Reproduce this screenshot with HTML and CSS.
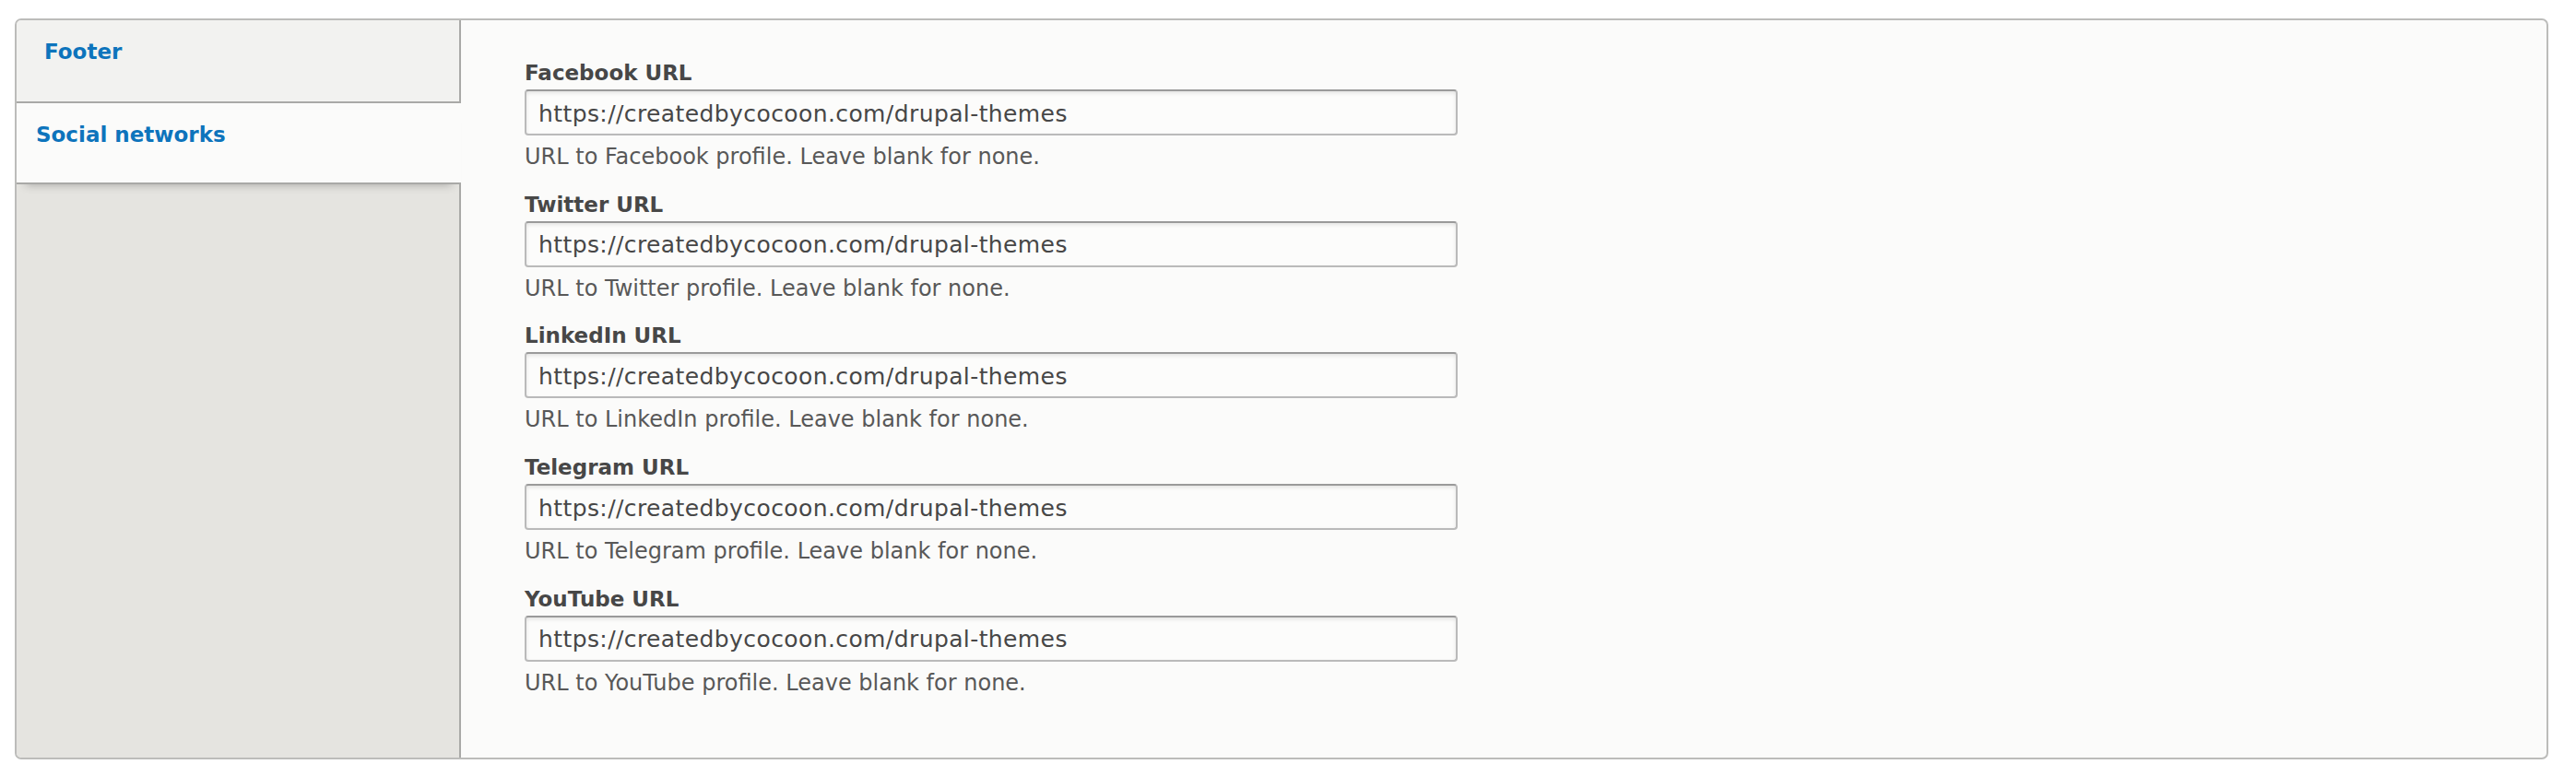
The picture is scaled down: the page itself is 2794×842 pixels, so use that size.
FILE: index.html
```html
<!DOCTYPE html>
<html lang="en">
<head>
<meta charset="utf-8">
<title>Social networks</title>
<link rel="stylesheet" href="styles.css">
</head>
<body>
<div class="page">
  <div class="vtabs">
    <ul class="vtabs-menu">
      <li class="vtabs-item"><a href="#" class="vtabs-link">Footer</a></li>
      <li class="vtabs-item is-selected"><a href="#" class="vtabs-link">Social networks</a></li>
    </ul>
    <div class="vtabs-pane">
      <div class="form-item">
        <label class="form-label" for="fb">Facebook URL</label>
        <input class="form-text" id="fb" type="text" value="https://createdbycocoon.com/drupal-themes">
        <div class="form-desc">URL to Facebook profile. Leave blank for none.</div>
      </div>
      <div class="form-item">
        <label class="form-label" for="tw">Twitter URL</label>
        <input class="form-text" id="tw" type="text" value="https://createdbycocoon.com/drupal-themes">
        <div class="form-desc">URL to Twitter profile. Leave blank for none.</div>
      </div>
      <div class="form-item">
        <label class="form-label" for="li">LinkedIn URL</label>
        <input class="form-text" id="li" type="text" value="https://createdbycocoon.com/drupal-themes">
        <div class="form-desc">URL to LinkedIn profile. Leave blank for none.</div>
      </div>
      <div class="form-item">
        <label class="form-label" for="tg">Telegram URL</label>
        <input class="form-text" id="tg" type="text" value="https://createdbycocoon.com/drupal-themes">
        <div class="form-desc">URL to Telegram profile. Leave blank for none.</div>
      </div>
      <div class="form-item">
        <label class="form-label" for="yt">YouTube URL</label>
        <input class="form-text" id="yt" type="text" value="https://createdbycocoon.com/drupal-themes">
        <div class="form-desc">URL to YouTube profile. Leave blank for none.</div>
      </div>
    </div>
  </div>
</div>
</body>
</html>
```

FILE: styles.css
```css
html, body {
  margin: 0;
  padding: 0;
  background: #ffffff;
}

body {
  font-family: "DejaVu Sans", "Liberation Sans", sans-serif;
  color: #333;
}

.page {
  padding: 20px 30px 18px 16px;
}

.vtabs {
  display: flex;
  border: 2px solid #bcbcba;
  border-radius: 7px;
  overflow: hidden;
  background: #fbfbfa;
}

.vtabs-menu {
  list-style: none;
  margin: 0;
  padding: 0;
  width: 480px;
  flex: none;
  background: #e5e4e0;
  border-right: 2px solid #a9a9a7;
}

.vtabs-item {
  background: #f2f2f0;
  border-bottom: 2px solid #a9a9a7;
}

.vtabs-item.is-selected {
  position: relative;
  background: #fbfbfa;
  margin-right: -2px;
  box-shadow: 0 10px 10px -10px rgba(0, 0, 0, 0.3);
}

.vtabs-link {
  display: block;
  height: 88px;
  box-sizing: border-box;
  padding: 19px 20px 0 30px;
  font-size: 23px;
  line-height: 30px;
  font-weight: bold;
  color: #0d74bc;
  text-decoration: none;
}

.vtabs-item.is-selected .vtabs-link {
  height: 86px;
  padding-left: 21px;
}

.vtabs-pane {
  flex: 1;
  padding: 43px 40px 66px 69px;
}

.form-item {
  margin-bottom: 22.7px;
}

.form-item:last-child {
  margin-bottom: 0;
}

.form-label {
  display: block;
  font-size: 23px;
  line-height: 28px;
  font-weight: bold;
  color: #474747;
  margin-bottom: 4px;
}

.form-text {
  display: block;
  box-sizing: border-box;
  width: 1012px;
  height: 50px;
  margin: 0;
  padding: 2px 13px 0;
  border: 2px solid #bababa;
  border-top-color: #9a9a9a;
  border-radius: 4px;
  box-shadow: inset 0 2px 4px rgba(0, 0, 0, 0.1);
  background: #fcfcfb;
  font-family: "DejaVu Sans", "Liberation Sans", sans-serif;
  font-size: 25px;
  letter-spacing: 0.4px;
  color: #474747;
  outline: none;
}

.form-desc {
  margin-top: 8px;
  font-size: 24px;
  line-height: 30px;
  color: #585858;
}
```
